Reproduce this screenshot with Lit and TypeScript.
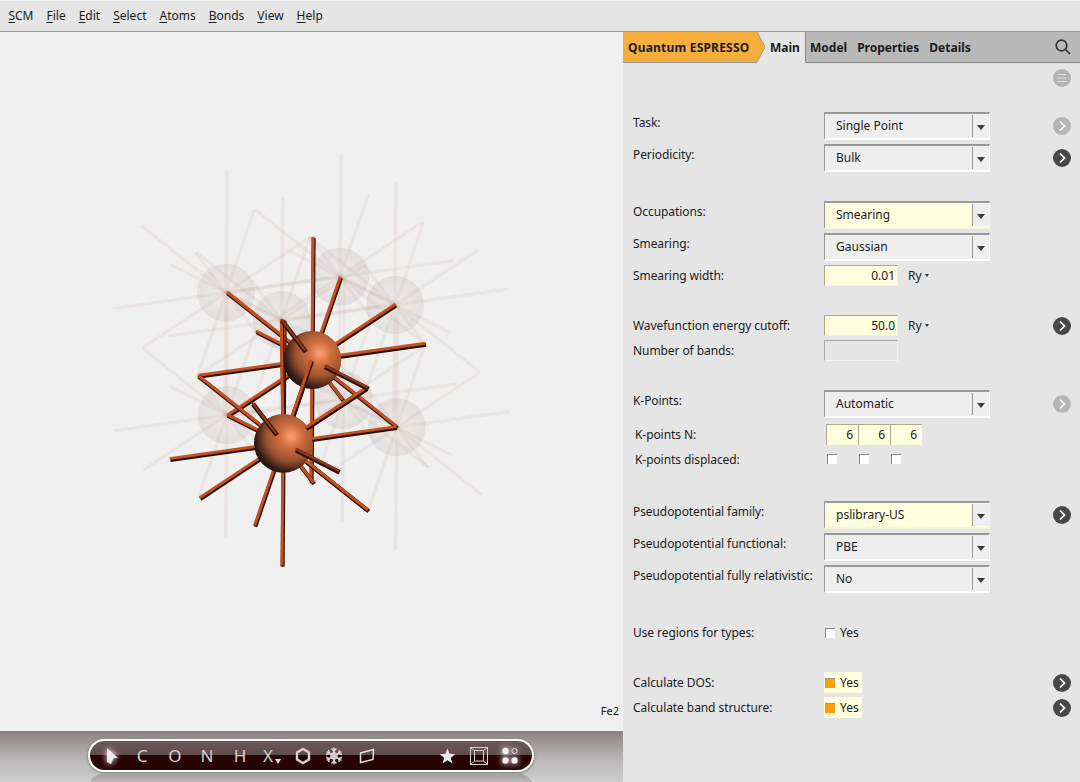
import { LitElement, html, css, svg } from "lit";
import { customElement } from "lit/decorators.js";

type P = [number, number];
const half: P[] = [[340, -48], [250, -165], [85, -248], [3, -368], [255, 202]];
const vecs: P[] = [
  ...half,
  ...half.map(([x, y]) => [-x, -y] as P),
  [168, 85], [-168, -85], [92, 120], [-92, -120],
];
const A: P = [637, 630];
const B: P = [550, 880];
const ghosts: P[] = [[378, 428], [720, 380], [885, 465], [545, 510], [380, 795], [890, 832], [730, 750]];
const front: P[] = [[168, 85], [-92, -120]];
const isFront = (v: P) => front.some((f) => f[0] === v[0] && f[1] === v[1]);

const tube = (a: P, v: P, dark = false) => svg`
  <line x1=${a[0] + 1} y1=${a[1] + 2} x2=${a[0] + v[0] + 1} y2=${a[1] + v[1] + 2} stroke="#2a0f06" stroke-width=${dark ? 14 : 12}></line>
  <line x1=${a[0] - 1} y1=${a[1] - 2} x2=${a[0] + v[0] - 1} y2=${a[1] + v[1] - 2} stroke=${dark ? "#8a3c16" : "#c4501e"} stroke-width=${dark ? 7 : 9}></line>`;

const backVecs = vecs.filter((v) => !isFront(v));
const part = (o: P, v: P, t: number) => tube([o[0] + v[0] * t, o[1] + v[1] * t], [v[0] * (1 - t), v[1] * (1 - t)]);
const partDark = (o: P, v: P, t: number) => tube([o[0] + v[0] * t, o[1] + v[1] * t], [v[0] * (1 - t), v[1] * (1 - t)], true);

function molecule() {
  return html`<svg class="mol" viewBox="0 32 623 699">
    <defs>
      <radialGradient id="sph" cx="0.63" cy="0.38" r="0.72">
        <stop offset="0" stop-color="#ffa076"></stop>
        <stop offset="0.26" stop-color="#d2703f"></stop>
        <stop offset="0.58" stop-color="#9a5230"></stop>
        <stop offset="0.82" stop-color="#3a2016"></stop>
        <stop offset="1" stop-color="#0a0a0a"></stop>
      </radialGradient>
      <radialGradient id="gh">
        <stop offset="0" stop-color="#c09880" stop-opacity="0.06"></stop>
        <stop offset="1" stop-color="#6a5a58" stop-opacity="0.11"></stop>
      </radialGradient>
    </defs>
    <g transform="translate(100 150) scale(0.3333)">
      ${ghosts.map((g) => vecs.map((v) => svg`<line x1=${g[0]} y1=${g[1]} x2=${g[0] + v[0]} y2=${g[1] + v[1]} stroke="#b88e78" stroke-opacity="0.1" stroke-width="10"></line>`))}
      ${ghosts.map((g) => svg`<circle cx=${g[0]} cy=${g[1]} r="87" fill="url(#gh)"></circle>`)}
      ${backVecs.map((v) => tube(A, v))}
      ${backVecs.map((v) => tube(B, v))}
      <circle cx=${A[0]} cy=${A[1]} r="87" fill="url(#sph)"></circle>
      ${part(B, [-5, -370], 0.2)}
      ${part(B, [85, -248], 0.32)}
      <circle cx=${B[0]} cy=${B[1]} r="88" fill="url(#sph)"></circle>
      ${part(B, [255, 202], 0.27)}
      ${part(B, [250, -165], 0.27)}
      ${front.map((f) => [partDark(A, f, 0.22), partDark(B, f, 0.22)])}
    </g>
  </svg>`;
}

const chevron = html`<svg class="chev" viewBox="0 0 18 18"><circle cx="9" cy="9" r="9" fill="currentColor"></circle><path d="M7 4.5 L11.5 9 L7 13.5" fill="none" stroke="#fff" stroke-width="1.7"></path></svg>`;

@customElement("app-root")
export class AppRoot extends LitElement {
  static styles = css`
    :host { display: flex; flex-direction: column; width: 1080px; height: 782px; overflow: hidden; font-family: "Noto Sans", sans-serif; font-size: 12px; color: #1b1b22; background: #e5e5e5; }
    .menubar { display: flex; align-items: center; gap: 13px; height: 31px; padding-left: 8.4px; background: #e5e5e5; border-bottom: 1px solid #999; box-shadow: inset 0 1px 0 #f2f2f2; flex: none; }
    .menubar u { text-underline-offset: 2px; }
    .main { display: flex; flex: 1; min-height: 0; }
    .left { width: 623px; display: flex; flex-direction: column; flex: none; }
    .canvas { position: relative; height: 699px; background: #f0f0f0; flex: none; }
    .mol { display: block; width: 623px; height: 699px; }
    .fe { position: absolute; right: 4px; bottom: 13px; font-size: 11px; }
    .toolbar { flex: 1; background: linear-gradient(#8c8181, #b6b3b3 50%, #cfcfcf); overflow: hidden; padding-top: 8px; }
    .pill { box-sizing: border-box; width: 446px; height: 33px; margin-left: 88px; border: 2px solid #fff; border-radius: 17px; background: linear-gradient(#6c5757 0, #5f4c4c 48%, #280505 48%, #280505 100%); display: grid; grid-template-columns: 6px 32px 28px 38px 26px 40px 16px 54px 8px 58px 31px 40px 24px 38px; align-items: center; justify-items: center; box-shadow: 0 1px 3px rgba(60, 50, 50, 0.6); color: #d8d0d0; font-size: 17px; line-height: 29px; }
    .pill svg { display: block; }
    .sp { width: 0; }
    .glow { filter: drop-shadow(0 0 3px #fff); }
    .x { position: relative; }
    .x i { position: absolute; left: 12px; top: 18px; width: 0; height: 0; border: 3.5px solid transparent; border-top: 5px solid #e5e0e0; border-bottom: 0; }
    .reflect { width: 442px; height: 12px; margin: 2px 0 0 90px; border-radius: 14px 14px 0 0; background: linear-gradient(#a3a0a0, #c4c4c4); }
    .panel { flex: 1; display: flex; flex-direction: column; min-width: 0; }
    .tabs { display: flex; align-items: stretch; height: 31px; flex: none; font-weight: 700; }
    .orange { width: 134px; box-sizing: border-box; padding-left: 5px; background: #f6ae3d; display: flex; align-items: center; border-bottom: 1px solid #999; letter-spacing: 0.2px; }
    .tip { display: block; width: 8px; height: 31px; flex: none; }
    .maintab { width: 40px; box-sizing: border-box; padding-left: 5px; display: flex; align-items: center; }
    .rest { flex: 1; display: flex; align-items: center; gap: 10px; padding-left: 4px; background: #b9b9b9; border-left: 1px solid #888; border-bottom: 1px solid #888; border-top: 1px solid #999; margin-top: -1px; }
    .search { margin-left: auto; margin-right: 8px; display: block; }
    .body { padding: 6px 9px 0 10px; }
    .top { display: flex; justify-content: flex-end; height: 43px; }
    .burger { display: block; }
    .group { display: flex; flex-direction: column; gap: 4px; margin-bottom: 29px; }
    .row { display: grid; grid-template-columns: 191px 229px 18px; }
    .row .label { line-height: 21px; height: 21px; white-space: nowrap; letter-spacing: -0.08px; }
    .row .go { align-self: center; height: 18px; }
    .row .go svg { display: block; width: 18px; height: 18px; }
    .row .go.off { color: #b5b5b5; }
    .row .go.on { color: #484848; }
    .sel { box-sizing: border-box; width: 166px; height: 28px; display: flex; background: #eee; border-top: 2px solid #999; border-left: 1px solid #999; border-bottom: 2px solid #fff; border-right: 1px solid #fff; }
    .sel.y { background: #ffffdf; border-bottom-color: #f6f6d8; border-right-color: #f6f6d8; }
    .sel .v { flex: 1; padding-left: 11px; line-height: 23px; }
    .sel .arrow { width: 16px; margin: 1px 0; background: #eee; border-left: 1px solid #999; display: flex; align-items: center; justify-content: center; }
    .sel .arrow::after { content: ""; border: 4px solid transparent; border-top: 5px solid #3c3c3c; border-bottom: 0; margin-top: 2px; }
    .field { display: flex; align-items: center; height: 21px; }
    .inp { box-sizing: border-box; width: 74px; height: 21px; line-height: 19px; text-align: right; padding-right: 2px; background: #ffffdf; border-top: 1px solid #aaa78e; border-left: 1px solid #aaa78e; border-bottom: 1px solid #f4f4dc; border-right: 1px solid #f4f4dc; }
    .inp.off { background: #e5e5e5; border-color: #aaa #f2f2f2 #f2f2f2 #aaa; }
    .unit { margin-left: 10px; display: flex; align-items: center; gap: 3px; }
    .unit::after { content: ""; border: 2px solid transparent; border-top: 3px solid #333; border-bottom: 0; }
    .ind .label { padding-left: 2px; }
    .ks { display: flex; padding-left: 2px; }
    .k { box-sizing: border-box; width: 32px; height: 21px; line-height: 20px; text-align: right; padding-right: 5px; background: #ffffdf; border-top: 1px solid #aaa78e; border-left: 1px solid #aaa78e; }
    .cbs { display: flex; gap: 22px; padding: 5px 0 0 3px; height: 21px; box-sizing: border-box; }
    .cb { box-sizing: border-box; width: 10px; height: 10px; background: #fff; border-top: 1px solid #888; border-left: 1px solid #888; flex: none; }
    .cb.on { background: #ff9f0a; border-color: #999; }
    .chk { display: flex; align-items: center; gap: 5px; height: 21px; padding-left: 1px; }
    .chk.y { background: #ffffdf; width: 38px; box-sizing: border-box; }
    .kgroup { gap: 0; margin-bottom: 27px; }
    .kgroup .row { margin-bottom: 4px; }
    .kgroup .row:first-child { margin-bottom: 6px; }
  `;

  sel(label: string, value: string, y = false, go = "") {
    return html`<div class="row"><div class="label">${label}</div><div class="sel ${y ? "y" : ""}"><div class="v">${value}</div><div class="arrow"></div></div>${go ? html`<div class="go ${go}">${chevron}</div>` : ""}</div>`;
  }

  inp(label: string, value: string, unit = "", go = "", off = false) {
    return html`<div class="row"><div class="label">${label}</div><div class="field"><div class="inp ${off ? "off" : ""}">${value}</div>${unit ? html`<div class="unit">${unit}</div>` : ""}</div>${go ? html`<div class="go ${go}">${chevron}</div>` : ""}</div>`;
  }

  chk(label: string, on: boolean) {
    return html`<div class="row"><div class="label">${label}</div><div class="field"><div class="chk ${on ? "y" : ""}"><div class="cb ${on ? "on" : ""}"></div>Yes</div></div>${on ? html`<div class="go on">${chevron}</div>` : ""}</div>`;
  }

  render() {
    const menus = ["SCM", "File", "Edit", "Select", "Atoms", "Bonds", "View", "Help"];
    return html`
      <div class="menubar">${menus.map((m) => html`<span><u>${m[0]}</u>${m.slice(1)}</span>`)}</div>
      <div class="main">
        <div class="left">
          <div class="canvas">${molecule()}<div class="fe">Fe2</div></div>
          <div class="toolbar">
            <div class="pill">
              <span class="sp"></span>
              <svg class="glow" width="14" height="18" viewBox="0 0 14 18"><path d="M2 1 L13 11 L8.5 11 L6 17 L2 15 Z" fill="#f0eaea"></path></svg>
              <span>C</span><span>O</span><span>N</span><span>H</span>
              <span class="x">X<i></i></span>
              <svg width="16" height="18" viewBox="0 0 16 18"><path d="M8 2 L14 5.5 L14 12.5 L8 16 L2 12.5 L2 5.5 Z" fill="none" stroke="#d8d0d0" stroke-width="2.4"></path></svg>
              <svg width="18" height="18" viewBox="0 0 18 18" stroke="#e2dcdc" stroke-width="1.4" fill="none"><path d="M9 0.5 V17.5 M1.6 4.7 L16.4 13.3 M1.6 13.3 L16.4 4.7"></path><path d="M6.5 1.5 L9 4 L11.5 1.5 M6.5 16.5 L9 14 L11.5 16.5 M1 7.5 L4.5 6.5 L3.5 3 M17 7.5 L13.5 6.5 L14.5 3 M1 10.5 L4.5 11.5 L3.5 15 M17 10.5 L13.5 11.5 L14.5 15"></path><circle cx="9" cy="9" r="3"></circle></svg>
              <svg width="16" height="16" viewBox="0 0 16 16"><path d="M1.5 5 L14.5 1.5 L14 11.5 L1.5 14.5 Z" fill="none" stroke="#e2dcdc" stroke-width="1.5"></path></svg>
              <span></span>
              <svg width="17" height="16" viewBox="0 0 17 16"><path d="M8.5 0.5 L10.6 5.8 L16.4 6.2 L11.9 9.8 L13.4 15.5 L8.5 12.3 L3.6 15.5 L5.1 9.8 L0.6 6.2 L6.4 5.8 Z" fill="#eee8e8"></path></svg>
              <svg width="18" height="18" viewBox="0 0 18 18" fill="none" stroke="#d8d2d2" stroke-width="1"><rect x="0.5" y="0.5" width="17" height="17"></rect><rect x="4.5" y="3.5" width="9" height="10.5"></rect><path d="M0.5 0.5 L4.5 3.5 M17.5 0.5 L13.5 3.5 M0.5 17.5 L4.5 14 M17.5 17.5 L13.5 14"></path></svg>
              <svg class="glow" width="18" height="18" viewBox="0 0 18 18"><circle cx="4.5" cy="4" r="3.2" fill="#f4f0f0"></circle><circle cx="13.5" cy="4" r="2.6" fill="none" stroke="#ddd" stroke-width="1"></circle><circle cx="4.5" cy="13.5" r="3.2" fill="#f4f0f0"></circle><circle cx="13.5" cy="13.5" r="3.2" fill="#f4f0f0"></circle></svg>
            </div>
            <div class="reflect"></div>
          </div>
        </div>
        <div class="panel">
          <div class="tabs">
            <div class="orange">Quantum ESPRESSO</div>
            <svg class="tip" viewBox="0 0 8 31"><path d="M0 0 L8 15 L0 30 Z" fill="#f6ae3d"></path><path d="M0 0 L8 15 L0 30" fill="none" stroke="#a09a90" stroke-width="1"></path></svg>
            <div class="maintab">Main</div>
            <div class="rest">
              <span>Model</span><span>Properties</span><span>Details</span>
              <svg class="search" width="18" height="18" viewBox="0 0 18 18" fill="none" stroke="#333" stroke-width="1.7"><circle cx="7.5" cy="7.5" r="5.3"></circle><path d="M11.5 11.5 L16 16"></path></svg>
            </div>
          </div>
          <div class="body">
            <div class="top">
              <svg class="burger" width="18" height="18" viewBox="0 0 18 18"><circle cx="9" cy="9" r="9" fill="#b2b2b2"></circle><path d="M4.5 5.5 H13.5 M4.5 9 H13.5 M4.5 12.5 H13.5" stroke="#e0e0e0" stroke-width="1.2"></path></svg>
            </div>
            <div class="group">
              ${this.sel("Task:", "Single Point", false, "off")}
              ${this.sel("Periodicity:", "Bulk", false, "on")}
            </div>
            <div class="group">
              ${this.sel("Occupations:", "Smearing", true)}
              ${this.sel("Smearing:", "Gaussian")}
              ${this.inp("Smearing width:", "0.01", "Ry")}
            </div>
            <div class="group">
              ${this.inp("Wavefunction energy cutoff:", "50.0", "Ry", "on")}
              ${this.inp("Number of bands:", "", "", "", true)}
            </div>
            <div class="group kgroup">
              ${this.sel("K-Points:", "Automatic", false, "off")}
              <div class="row ind"><div class="label">K-points N:</div><div class="ks"><div class="k">6</div><div class="k">6</div><div class="k">6</div></div></div>
              <div class="row ind"><div class="label">K-points displaced:</div><div class="cbs"><div class="cb"></div><div class="cb"></div><div class="cb"></div></div></div>
            </div>
            <div class="group">
              ${this.sel("Pseudopotential family:", "pslibrary-US", true, "on")}
              ${this.sel("Pseudopotential functional:", "PBE")}
              ${this.sel("Pseudopotential fully relativistic:", "No")}
            </div>
            <div class="group">${this.chk("Use regions for types:", false)}</div>
            <div class="group">
              ${this.chk("Calculate DOS:", true)}
              ${this.chk("Calculate band structure:", true)}
            </div>
          </div>
        </div>
      </div>
    `;
  }
}
